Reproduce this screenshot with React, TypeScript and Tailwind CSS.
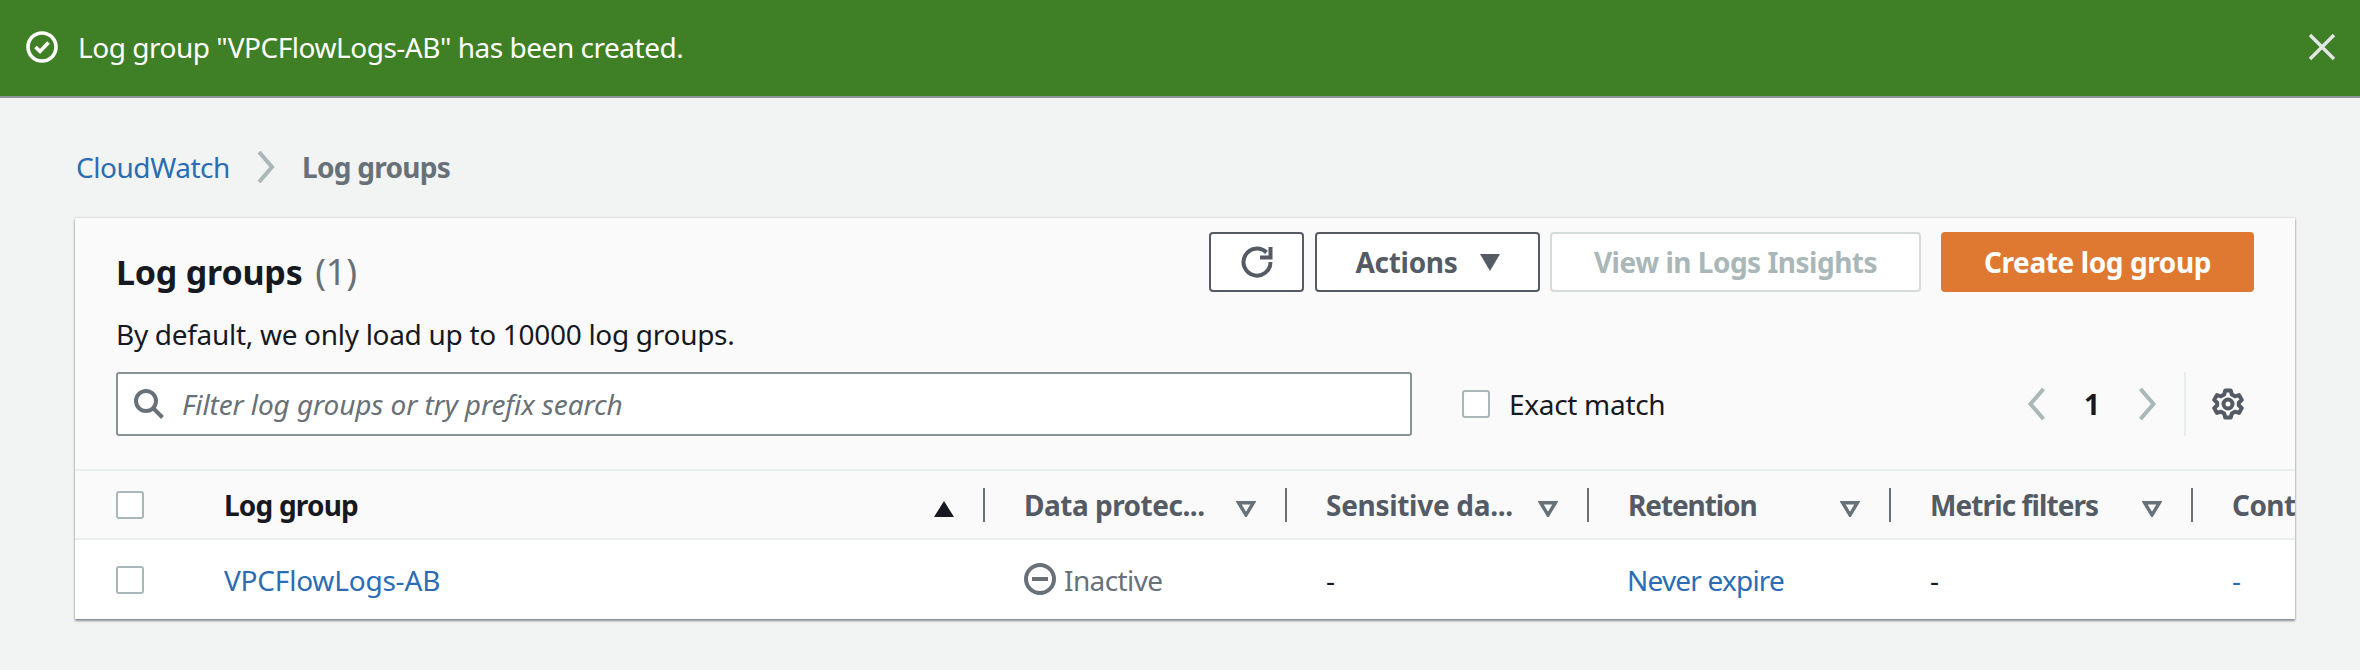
import React from "react";

const F = "font-['Noto_Sans',sans-serif]";

function Chevron({ dir, className }: { dir: "l" | "r"; className: string }) {
  return (
    <svg viewBox="0 0 18 32" className={className} fill="none" stroke="currentColor" strokeWidth="4">
      <path d={dir === "r" ? "M2 1 L15 16 L2 31" : "M16 1 L3 16 L16 31"} />
    </svg>
  );
}

function Check({ className = "" }: { className?: string }) {
  return <div className={"w-[28px] h-[28px] bg-white border-2 border-[#aab7b8] rounded-[3px] shrink-0 " + className} />;
}

function HeaderCell({ label, track, last }: { label: string; track: string; last?: boolean }) {
  return (
    <div className="w-[300px] shrink-0 flex items-center pl-[39px] pr-[29px] justify-between">
      <span className={"text-[28px] font-bold text-[#545b64] whitespace-nowrap " + track}>{label}</span>
      {!last && (
        <svg viewBox="0 0 20 16" className="w-[20px] h-[16px] mt-[8px] text-[#687078]" fill="none" stroke="currentColor" strokeWidth="3.4">
          <path d="M2.6 1.7 H17.4 L10 14 Z" />
        </svg>
      )}
    </div>
  );
}

const cols = [
  { label: "Data protec...", track: "tracking-[-0.5px]" },
  { label: "Sensitive da...", track: "tracking-[-0.3px]" },
  { label: "Retention", track: "tracking-[-1.1px]" },
  { label: "Metric filters", track: "tracking-[-0.9px]" },
  { label: "Cont", track: "tracking-[-0.6px]" },
];

export default function App() {
  return (
    <div className={F + " w-[2360px] h-[670px] bg-[#f2f3f3] overflow-hidden text-[#16191f]"}>
      <div className="h-[98px] bg-[#3f7f25] border-b-2 border-[#8d9499] flex items-center pl-[26px] pr-[24px] text-white">
        <svg viewBox="0 0 32 32" className="w-[32px] h-[32px] shrink-0 -mt-[3px]" fill="none" stroke="currentColor" strokeWidth="3.6">
          <circle cx="16" cy="16" r="14" />
          <path d="M9.5 16 L14 20.5 L22.5 11.5" />
        </svg>
        <span className="ml-[20px] text-[28px] tracking-[-0.48px] -mt-[2px]">Log group "VPCFlowLogs-AB" has been created.</span>
        <svg viewBox="0 0 28 28" className="ml-auto w-[28px] h-[28px] text-[#e4e7e7] -mt-[3px]" fill="none" stroke="currentColor" strokeWidth="3.4">
          <path d="M2 2 L26 26 M26 2 L2 26" />
        </svg>
      </div>

      <div className="pl-[75px] pt-[48px]">
        <nav className="flex items-center h-[42px] text-[28px] pl-[1px]">
          <span className="text-[#2a6db4] tracking-[-0.45px]">CloudWatch</span>
          <Chevron dir="r" className="w-[18px] h-[32px] ml-[27px] text-[#aab7b8]" />
          <span className="ml-[27px] font-bold text-[#687078] tracking-[-0.7px]">Log groups</span>
        </nav>

        <section className="mt-[30px] w-[2220px] h-[401px] bg-[#fafafa] shadow-[0_2px_2px_rgba(60,70,80,0.55),0_0_2px_rgba(60,70,80,0.3)] overflow-hidden">
          <div className="flex pl-[41px] pr-[41px] pt-[14px] h-[251px] relative">
            <div className="flex-1 min-w-0">
              <h1 className="mt-[16px] text-[34px] leading-[48px] font-bold text-[#16191f] tracking-[-0.2px]">
                Log groups <span className="ml-[4px] text-[36px] font-normal text-[#687078]">(1)</span>
              </h1>
              <p className="mt-[19px] text-[28px] leading-[38px] tracking-[-0.3px]">By default, we only load up to 10000 log groups.</p>
              <div className="mt-[19px] flex items-center h-[64px]">
                <div className="w-[1296px] h-[64px] bg-white border-2 border-[#879596] rounded-[3px] flex items-center pl-[16px]">
                  <svg viewBox="0 0 30 30" className="w-[30px] h-[30px] text-[#687078]" fill="none" stroke="currentColor" strokeWidth="4">
                    <circle cx="12" cy="12" r="10" />
                    <path d="M19 19 L28.5 28.5" />
                  </svg>
                  <span className="ml-[18px] text-[28px] italic text-[#687078] tracking-[-0.1px]">Filter log groups or try prefix search</span>
                </div>
                <Check className="ml-[50px]" />
                <span className="ml-[19px] text-[28px] tracking-[-0.3px]">Exact match</span>
                <div className="ml-auto flex items-center h-[64px] mr-[1px]">
                  <Chevron dir="l" className="w-[19px] h-[32px] text-[#aab7b8]" />
                  <span className="w-[92px] text-center text-[28px] font-bold">1</span>
                  <Chevron dir="r" className="w-[19px] h-[32px] text-[#aab7b8]" />
                  <div className="ml-[27px] w-[2px] h-[64px] bg-[#eaeded]" />
                  <svg viewBox="0 0 32 32" className="ml-[26px] mr-[9px] w-[32px] h-[32px] text-[#545b64]" fill="none" stroke="currentColor" strokeWidth="4" strokeLinejoin="round">
                    <circle cx="16" cy="16" r="4.5" />
                    <path d="M13.2 2.5 H18.8 L19.8 6.5 L23 8.3 L27 7.1 L29.8 11.9 L26.8 14.8 V17.2 L29.8 20.1 L27 24.9 L23 23.7 L19.8 25.5 L18.8 29.5 H13.2 L12.2 25.5 L9 23.7 L5 24.9 L2.2 20.1 L5.2 17.2 V14.8 L2.2 11.9 L5 7.1 L9 8.3 L12.2 6.5 Z" />
                  </svg>
                </div>
              </div>
            </div>
            <div className="absolute top-[14px] right-[41px] flex items-start">
              <button className="w-[95px] h-[60px] bg-white border-2 border-[#545b64] rounded-[4px] flex items-center justify-center text-[#545b64]">
                <svg viewBox="0 0 32 32" className="w-[32px] h-[32px]" fill="none" stroke="currentColor" strokeWidth="4">
                  <path d="M25.5 6.5 A13.5 13.5 0 1 0 29.5 16" />
                  <path d="M29.5 1 V11.5 H19" />
                </svg>
              </button>
              <button className="ml-[11px] w-[225px] h-[60px] bg-white border-2 border-[#545b64] rounded-[4px] flex items-center justify-center text-[28px] font-bold tracking-[-0.3px] text-[#545b64]">
                Actions
                <svg viewBox="0 0 20 17" className="ml-[22px] w-[20px] h-[17px] fill-current"><path d="M0 0 H20 L10 17 Z" /></svg>
              </button>
              <button className="ml-[10px] w-[371px] h-[60px] bg-white border-2 border-[#d5dbdb] rounded-[4px] text-[28px] font-bold tracking-[-0.5px] text-[#aab7b8]">View in Logs Insights</button>
              <button className="ml-[20px] w-[313px] h-[60px] bg-[#df7932] rounded-[4px] text-[28px] font-bold tracking-[-0.4px] text-white">Create log group</button>
            </div>
          </div>

          <div className="h-[2px] bg-[#eaeded]" />
          <div className="flex h-[67px] items-center">
            <div className="w-[108px] shrink-0 flex items-center pl-[41px] h-[34px]">
              <Check />
              <div className="ml-[39px] w-[1px] h-[34px] bg-[#eaeded]" />
            </div>
            <div className="w-[800px] shrink-0 flex items-center pl-[41px] pr-[29px] justify-between">
              <span className="text-[28px] font-bold tracking-[-0.8px]">Log group</span>
              <svg viewBox="0 0 20 16" className="w-[20px] h-[16px] mt-[8px] fill-[#16191f]"><path d="M10 0 L20 16 H0 Z" /></svg>
            </div>
            <div className="flex h-[34px] items-stretch">
              {cols.map((c, i) => (
                <div key={c.label} className="flex">
                  <div className="w-[2px] bg-[#687078]" />
                  <HeaderCell label={c.label} track={c.track} last={i === 4} />
                </div>
              ))}
            </div>
          </div>
          <div className="h-[2px] bg-[#eaeded]" />
          <div className="flex bg-white h-[79px] items-center text-[28px]">
            <div className="w-[108px] shrink-0 pl-[41px]"><Check /></div>
            <div className="w-[800px] shrink-0 pl-[41px] text-[#2a6db4] tracking-[-0.2px]">VPCFlowLogs-AB</div>
            <div className="w-[302px] shrink-0 pl-[41px] flex items-center text-[#687078]">
              <svg viewBox="0 0 32 32" className="w-[32px] h-[32px] -mt-[2px]" fill="none" stroke="currentColor" strokeWidth="4">
                <circle cx="16" cy="16" r="14" />
                <path d="M8 16 H24" />
              </svg>
              <span className="ml-[8px] tracking-[-0.6px]">Inactive</span>
            </div>
            <div className="w-[302px] shrink-0 pl-[41px]">-</div>
            <div className="w-[302px] shrink-0 pl-[40px] text-[#2a6db4] tracking-[-0.8px]">Never expire</div>
            <div className="w-[302px] shrink-0 pl-[41px]">-</div>
            <div className="w-[100px] shrink-0 pl-[41px] text-[#2a6db4]">-</div>
          </div>
        </section>
      </div>
    </div>
  );
}
